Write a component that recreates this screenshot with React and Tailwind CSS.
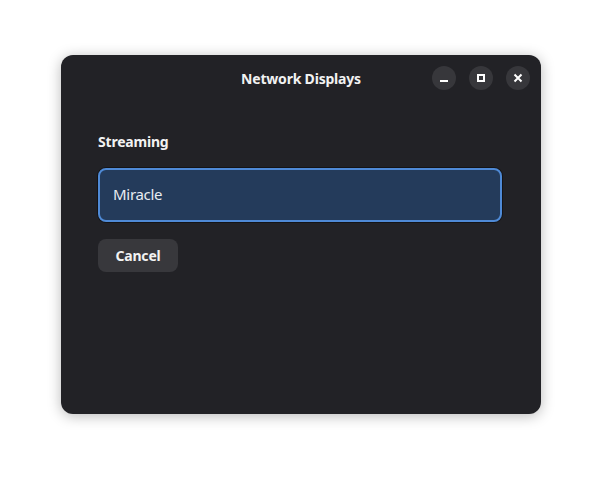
import React from 'react';

const WinButton = ({ children }) => (
  <button className="w-6 h-6 rounded-full bg-[#37373b] flex items-center justify-center text-white">
    {children}
  </button>
);

export default function App() {
  return (
    <div
      className="w-[602px] h-[482px] bg-white flex items-start justify-center pt-[55px]"
      style={{ fontFamily: '"Noto Sans", sans-serif' }}
    >
      <div className="w-[480px] h-[359px] rounded-[12px] bg-[#222226] shadow-[0_2px_14px_rgba(0,0,0,0.28)] flex flex-col">
        <div className="relative h-[46px] flex items-center justify-center">
          <span className="text-[14px] font-bold text-[#f2f2f2] tracking-[-0.2px]">Network Displays</span>
          <div className="absolute right-[11px] top-[11px] flex gap-[13px]">
            <WinButton>
              <span className="block w-[8px] h-[2px] bg-white mt-[6px]" />
            </WinButton>
            <WinButton>
              <span className="block w-[8px] h-[8px] border-2 border-white" />
            </WinButton>
            <WinButton>
              <svg width="10" height="10" viewBox="0 0 10 10">
                <path d="M1.5 1.5 L8.5 8.5 M8.5 1.5 L1.5 8.5" stroke="white" strokeWidth="2" />
              </svg>
            </WinButton>
          </div>
        </div>
        <div className="pl-[37px] pr-[39px] pt-[31px] flex flex-col">
          <div className="text-[14px] font-bold text-[#f2f2f2] tracking-[-0.2px] leading-[20px]">Streaming</div>
          <div className="mt-[16px] h-[54px] rounded-[8px] border-2 border-[#4f8ad6] bg-[#243b5b] flex items-center px-[13px] shadow-[0_0_0_1px_rgba(0,0,0,0.4)]">
            <span className="text-[15px] text-[#e8ecf2] tracking-[-0.3px] -mt-[2px]">Miracle</span>
          </div>
          <div className="mt-[17px]">
            <button className="h-[33px] w-[80px] rounded-[8px] bg-[#38383c] text-[14px] font-bold text-[#f2f2f2] tracking-[-0.2px]">
              Cancel
            </button>
          </div>
        </div>
      </div>
    </div>
  );
}
